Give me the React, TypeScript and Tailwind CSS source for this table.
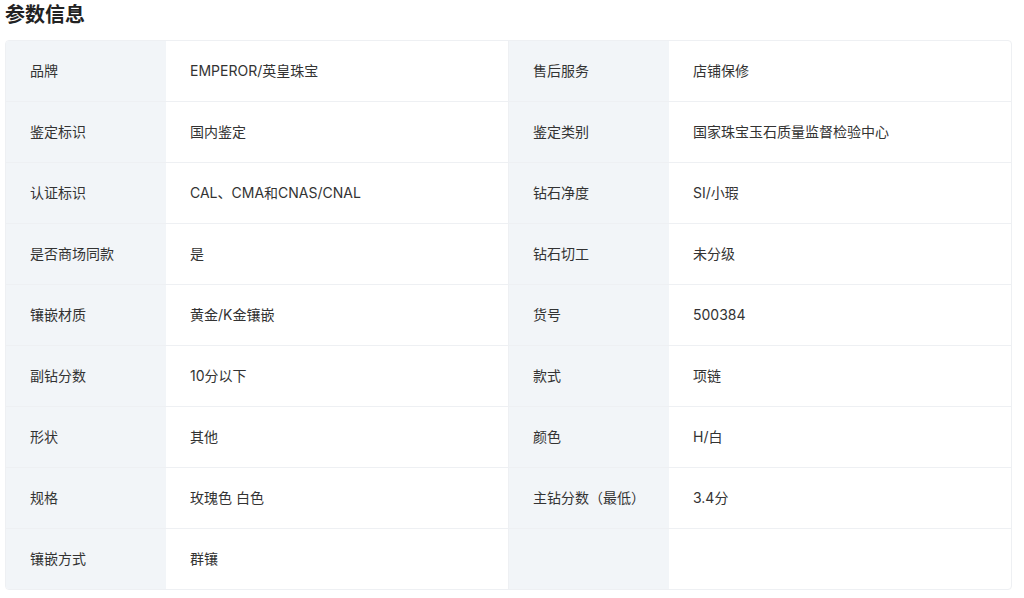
import React from "react";

const rows: [string, string, string, string][] = [
  ["品牌", "EMPEROR/英皇珠宝", "售后服务", "店铺保修"],
  ["鉴定标识", "国内鉴定", "鉴定类别", "国家珠宝玉石质量监督检验中心"],
  ["认证标识", "CAL、CMA和CNAS/CNAL", "钻石净度", "SI/小瑕"],
  ["是否商场同款", "是", "钻石切工", "未分级"],
  ["镶嵌材质", "黄金/K金镶嵌", "货号", "500384"],
  ["副钻分数", "10分以下", "款式", "项链"],
  ["形状", "其他", "颜色", "H/白"],
  ["规格", "玫瑰色 白色", "主钻分数（最低）", "3.4分"],
  ["镶嵌方式", "群镶", "", ""],
];

export default function App() {
  return (
    <div
      className="w-[1024px] h-[598px] bg-white text-[#333]"
      style={{ fontFamily: 'Inter, "Noto Sans CJK SC", sans-serif' }}
    >
      <div className="h-[40px] pl-[5px] pt-0">
        <h2
          className="text-[20px] leading-[30px] font-bold text-[#222]"
          style={{ fontFamily: '"Noto Sans", "Noto Sans CJK SC", sans-serif' }}
        >
          参数信息
        </h2>
      </div>
      <div className="ml-[5px] w-[1007px] border border-[#eef0f3] rounded-[4px] overflow-hidden">
        {rows.map((r, i) => (
          <div
            key={i}
            className={`flex text-[14px] ${i < rows.length - 1 ? "h-[61px] border-b border-[#eef0f3]" : "h-[60px]"}`}
          >
            <div className="w-[160px] bg-[#f2f5f8] flex items-center pl-[24px] pb-[2px]">{r[0]}</div>
            <div className="w-[342px] flex items-center pl-[24px] pb-[2px]">{r[1]}</div>
            <div className="w-[161px] bg-[#f2f5f8] border-l border-[#eef0f3] flex items-center pl-[24px] pb-[2px]">{r[2]}</div>
            <div className="flex-1 flex items-center pl-[24px] pb-[2px]">{r[3]}</div>
          </div>
        ))}
      </div>
    </div>
  );
}
